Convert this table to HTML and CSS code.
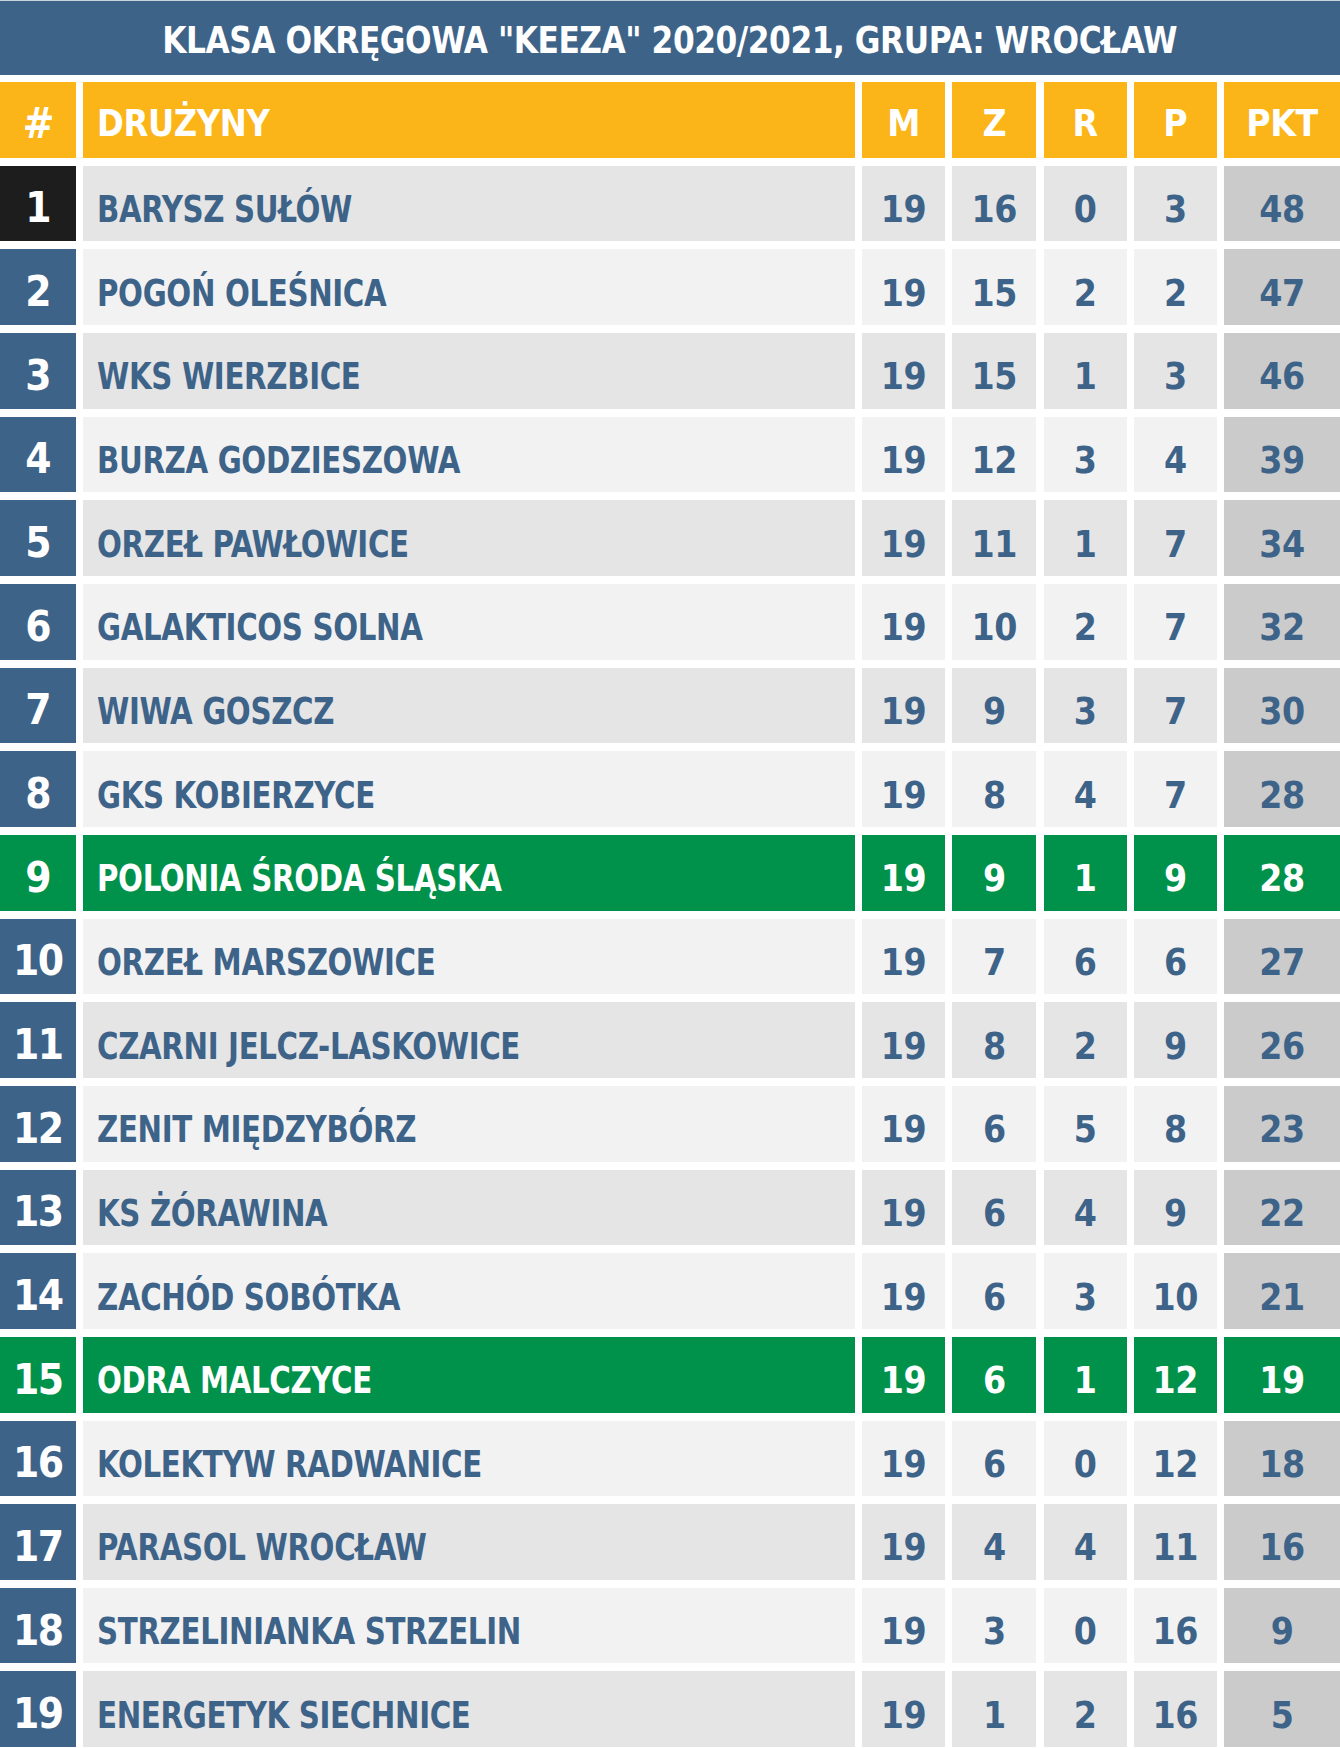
FILE: index.html
```html
<!DOCTYPE html>
<html lang="pl">
<head>
<meta charset="utf-8">
<title>Klasa Okręgowa Keeza 2020/2021</title>
<link rel="stylesheet" href="styles.css">
</head>
<body>
<div class="board">
  <div class="title"><span class="narrow">KLASA OKRĘGOWA "KEEZA" 2020/2021, GRUPA: WROCŁAW</span></div>
  <div class="table">
    <div class="row head">
      <div class="cell rank">#</div><div class="cell name"><span class="narrow">DRUŻYNY</span></div><div class="cell num">M</div><div class="cell num">Z</div><div class="cell num">R</div><div class="cell num">P</div><div class="cell num pkt">PKT</div>
    </div>
    <div class="row odd leader">
      <div class="cell rank">1</div><div class="cell name"><span class="narrow">BARYSZ SUŁÓW</span></div><div class="cell num">19</div><div class="cell num">16</div><div class="cell num">0</div><div class="cell num">3</div><div class="cell num pkt">48</div>
    </div>
    <div class="row even">
      <div class="cell rank">2</div><div class="cell name"><span class="narrow">POGOŃ OLEŚNICA</span></div><div class="cell num">19</div><div class="cell num">15</div><div class="cell num">2</div><div class="cell num">2</div><div class="cell num pkt">47</div>
    </div>
    <div class="row odd">
      <div class="cell rank">3</div><div class="cell name"><span class="narrow">WKS WIERZBICE</span></div><div class="cell num">19</div><div class="cell num">15</div><div class="cell num">1</div><div class="cell num">3</div><div class="cell num pkt">46</div>
    </div>
    <div class="row even">
      <div class="cell rank">4</div><div class="cell name"><span class="narrow">BURZA GODZIESZOWA</span></div><div class="cell num">19</div><div class="cell num">12</div><div class="cell num">3</div><div class="cell num">4</div><div class="cell num pkt">39</div>
    </div>
    <div class="row odd">
      <div class="cell rank">5</div><div class="cell name"><span class="narrow">ORZEŁ PAWŁOWICE</span></div><div class="cell num">19</div><div class="cell num">11</div><div class="cell num">1</div><div class="cell num">7</div><div class="cell num pkt">34</div>
    </div>
    <div class="row even">
      <div class="cell rank">6</div><div class="cell name"><span class="narrow">GALAKTICOS SOLNA</span></div><div class="cell num">19</div><div class="cell num">10</div><div class="cell num">2</div><div class="cell num">7</div><div class="cell num pkt">32</div>
    </div>
    <div class="row odd">
      <div class="cell rank">7</div><div class="cell name"><span class="narrow">WIWA GOSZCZ</span></div><div class="cell num">19</div><div class="cell num">9</div><div class="cell num">3</div><div class="cell num">7</div><div class="cell num pkt">30</div>
    </div>
    <div class="row even">
      <div class="cell rank">8</div><div class="cell name"><span class="narrow">GKS KOBIERZYCE</span></div><div class="cell num">19</div><div class="cell num">8</div><div class="cell num">4</div><div class="cell num">7</div><div class="cell num pkt">28</div>
    </div>
    <div class="row green">
      <div class="cell rank">9</div><div class="cell name"><span class="narrow">POLONIA ŚRODA ŚLĄSKA</span></div><div class="cell num">19</div><div class="cell num">9</div><div class="cell num">1</div><div class="cell num">9</div><div class="cell num pkt">28</div>
    </div>
    <div class="row even">
      <div class="cell rank">10</div><div class="cell name"><span class="narrow">ORZEŁ MARSZOWICE</span></div><div class="cell num">19</div><div class="cell num">7</div><div class="cell num">6</div><div class="cell num">6</div><div class="cell num pkt">27</div>
    </div>
    <div class="row odd">
      <div class="cell rank">11</div><div class="cell name"><span class="narrow">CZARNI JELCZ-LASKOWICE</span></div><div class="cell num">19</div><div class="cell num">8</div><div class="cell num">2</div><div class="cell num">9</div><div class="cell num pkt">26</div>
    </div>
    <div class="row even">
      <div class="cell rank">12</div><div class="cell name"><span class="narrow">ZENIT MIĘDZYBÓRZ</span></div><div class="cell num">19</div><div class="cell num">6</div><div class="cell num">5</div><div class="cell num">8</div><div class="cell num pkt">23</div>
    </div>
    <div class="row odd">
      <div class="cell rank">13</div><div class="cell name"><span class="narrow">KS ŻÓRAWINA</span></div><div class="cell num">19</div><div class="cell num">6</div><div class="cell num">4</div><div class="cell num">9</div><div class="cell num pkt">22</div>
    </div>
    <div class="row even">
      <div class="cell rank">14</div><div class="cell name"><span class="narrow">ZACHÓD SOBÓTKA</span></div><div class="cell num">19</div><div class="cell num">6</div><div class="cell num">3</div><div class="cell num">10</div><div class="cell num pkt">21</div>
    </div>
    <div class="row green">
      <div class="cell rank">15</div><div class="cell name"><span class="narrow">ODRA MALCZYCE</span></div><div class="cell num">19</div><div class="cell num">6</div><div class="cell num">1</div><div class="cell num">12</div><div class="cell num pkt">19</div>
    </div>
    <div class="row even">
      <div class="cell rank">16</div><div class="cell name"><span class="narrow">KOLEKTYW RADWANICE</span></div><div class="cell num">19</div><div class="cell num">6</div><div class="cell num">0</div><div class="cell num">12</div><div class="cell num pkt">18</div>
    </div>
    <div class="row odd">
      <div class="cell rank">17</div><div class="cell name"><span class="narrow">PARASOL WROCŁAW</span></div><div class="cell num">19</div><div class="cell num">4</div><div class="cell num">4</div><div class="cell num">11</div><div class="cell num pkt">16</div>
    </div>
    <div class="row even">
      <div class="cell rank">18</div><div class="cell name"><span class="narrow">STRZELINIANKA STRZELIN</span></div><div class="cell num">19</div><div class="cell num">3</div><div class="cell num">0</div><div class="cell num">16</div><div class="cell num pkt">9</div>
    </div>
    <div class="row odd">
      <div class="cell rank">19</div><div class="cell name"><span class="narrow">ENERGETYK SIECHNICE</span></div><div class="cell num">19</div><div class="cell num">1</div><div class="cell num">2</div><div class="cell num">16</div><div class="cell num pkt">5</div>
    </div>
  </div>
</div>
</body>
</html>
```
FILE: styles.css
```css
html, body {
  margin: 0;
  padding: 0;
  background: #ffffff;
}

.board {
  width: 1340px;
  font-family: "DejaVu Sans Condensed", "DejaVu Sans", sans-serif;
  font-weight: bold;
  font-stretch: condensed;
}

.narrow {
  display: inline-block;
  white-space: nowrap;
  transform: scaleX(0.88);
  transform-origin: left center;
}

.title {
  height: 75px;
  border-top: 1px solid #c9d3de;
  background: #3e6389;
  color: #ffffff;
  font-size: 38px;
  letter-spacing: -0.5px;
  display: flex;
  align-items: center;
  justify-content: center;
  padding-top: 4px;
  box-sizing: border-box;
}

.title .narrow {
  transform: scaleX(0.915);
  transform-origin: center center;
}

.table {
  margin-top: 7px;
  display: flex;
  flex-direction: column;
  gap: 8px;
}

.row {
  display: grid;
  grid-template-columns: 75.5px 772px 83px 84px 83px 83px 116px;
  column-gap: 7.25px;
  height: 75.67px;
}

.cell {
  display: flex;
  align-items: center;
  justify-content: center;
  padding-top: 12px;
  box-sizing: border-box;
  font-size: 37px;
  color: #3e6389;
}

.name {
  justify-content: flex-start;
  padding-left: 14px;
  letter-spacing: -0.4px;
}

.rank {
  background: #3e6389;
  color: #ffffff;
  font-size: 42px;
  padding-top: 9px;
  letter-spacing: -1.5px;
}

.num {
  letter-spacing: -0.5px;
}

.odd .name, .odd .num { background: #e5e5e5; }
.even .name, .even .num { background: #f2f2f2; }
.odd .pkt, .even .pkt { background: #cbcbcb; }

.leader .rank { background: #1d1d1d; }

.head .cell {
  background: #fbb519;
  color: #ffffff;
  padding-top: 8px;
}

.head .name .narrow {
  transform: scaleX(0.97);
}

.green .cell {
  background: #00924a;
  color: #ffffff;
}
```
